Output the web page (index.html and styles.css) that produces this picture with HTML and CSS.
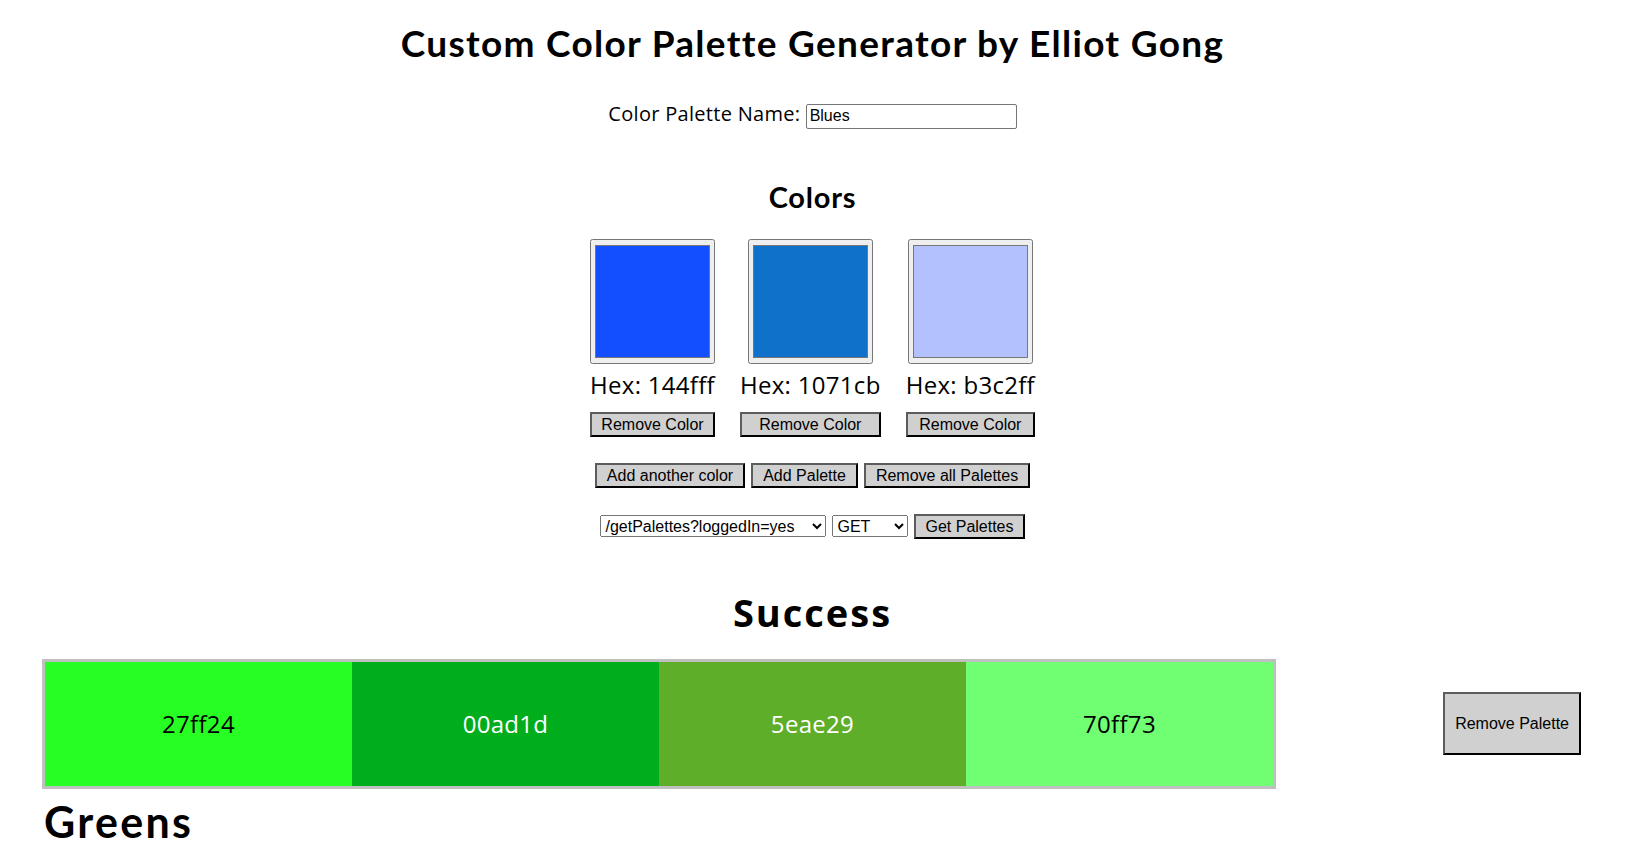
FILE: index.html
```html
<!DOCTYPE html>
<html lang="en">
<head>
<meta charset="utf-8">
<title>Custom Color Palette Generator</title>
<link rel="stylesheet" href="styles.css">
</head>
<body>
<h1 class="title">Custom Color Palette Generator by Elliot Gong</h1>
<div class="name-row"><label for="paletteName" class="name-label">Color Palette Name:</label> <input id="paletteName" class="name-input" type="text" value="Blues"></div>
<h2 class="section-title">Colors</h2>
<div class="colors">
  <div class="color-item">
    <input type="color" class="color-picker" value="#144fff">
    <p class="hex">Hex: 144fff</p>
    <button class="btn btn-block">Remove Color</button>
  </div>
  <div class="color-item">
    <input type="color" class="color-picker" value="#1071cb">
    <p class="hex">Hex: 1071cb</p>
    <button class="btn btn-block">Remove Color</button>
  </div>
  <div class="color-item">
    <input type="color" class="color-picker" value="#b3c2ff">
    <p class="hex">Hex: b3c2ff</p>
    <button class="btn btn-block">Remove Color</button>
  </div>
</div>
<div class="actions">
  <button class="btn">Add another color</button>
  <button class="btn">Add Palette</button>
  <button class="btn">Remove all Palettes</button>
</div>
<div class="request-row">
  <select class="select url-select">
    <option>/getPalettes?loggedIn=yes</option>
    <option>/getPalettes</option>
    <option>/notReal</option>
  </select>
  <select class="select method-select">
    <option>GET</option>
    <option>HEAD</option>
  </select>
  <button class="btn">Get Palettes</button>
</div>
<h2 class="status">Success</h2>
<div class="palettes">
  <div class="palette">
    <div class="palette-row">
      <div class="palette-bar">
        <div class="swatch" style="background-color:#27ff24">27ff24</div>
        <div class="swatch swatch-dark" style="background-color:#00ad1d">00ad1d</div>
        <div class="swatch swatch-dark" style="background-color:#5eae29">5eae29</div>
        <div class="swatch" style="background-color:#70ff73">70ff73</div>
      </div>
      <button class="btn btn-large">Remove Palette</button>
    </div>
    <h1 class="palette-name">Greens</h1>
  </div>
</div>
</body>
</html>
```
FILE: styles.css
```css
html, body {
  margin: 0;
  padding: 0;
  background: #ffffff;
  color: #000000;
}

body {
  font-family: "Open Sans", "Noto Sans", sans-serif;
}

.title {
  margin: 22px 0 0;
  font-family: "Lato", "Noto Sans", sans-serif;
  font-weight: 700;
  font-size: 37px;
  line-height: 42px;
  letter-spacing: 1.3px;
  text-align: center;
}

.name-row {
  margin-top: 37px;
  text-align: center;
  font-size: 20px;
  line-height: 25px;
}

.name-label {
  letter-spacing: 0.3px;
}

.name-input {
  box-sizing: border-box;
  width: 211px;
  height: 25px;
  margin: 0;
  padding: 1px 3px;
  font-family: "Liberation Sans", Arial, sans-serif;
  font-size: 16px;
  border: 1px solid #767676;
  border-radius: 2px;
  vertical-align: baseline;
}

.section-title {
  margin: 52px 0 0;
  font-family: "Lato", "Noto Sans", sans-serif;
  font-weight: 700;
  font-size: 29px;
  line-height: 32px;
  letter-spacing: 0.8px;
  text-align: center;
}

.colors {
  display: flex;
  justify-content: center;
  gap: 25px;
  margin-top: 26px;
}

.color-item {
  display: flex;
  flex-direction: column;
  align-items: center;
}

.color-picker {
  width: 125px;
  height: 125px;
  margin: 0;
}

.hex {
  margin: 6px 0 12px;
  font-size: 24px;
  line-height: 30px;
  letter-spacing: 0.3px;
  white-space: nowrap;
}

.btn {
  font-family: "Liberation Sans", Arial, sans-serif;
  font-size: 16px;
  line-height: 19px;
  color: #000;
  background: #d0d0d0;
  padding: 1px 9px;
  margin: 0;
  border: 2px solid;
  border-color: #5c5c5c #000 #000 #5c5c5c;
  border-radius: 0;
  white-space: nowrap;
}

.btn-block {
  align-self: stretch;
}

.actions {
  display: flex;
  justify-content: center;
  gap: 6px;
  margin-top: 26px;
}

.actions .btn {
  padding: 1px 10px;
}

.request-row {
  display: flex;
  justify-content: center;
  align-items: center;
  gap: 6px;
  margin-top: 26px;
}

.select {
  font-family: "Liberation Sans", Arial, sans-serif;
  font-size: 16px;
  height: 22px;
  margin: 0;
}

.url-select {
  width: 226px;
}

.method-select {
  width: 76px;
}

.status {
  margin: 50px 0 0;
  font-family: "Open Sans", sans-serif;
  font-weight: 700;
  font-size: 38px;
  line-height: 46px;
  letter-spacing: 2px;
  text-align: center;
}

.palettes {
  margin-top: 24px;
}

.palette-row {
  display: flex;
  align-items: center;
  justify-content: space-between;
  margin: 0 44px 0 42px;
}

.palette-bar {
  display: flex;
  flex: 0 0 1234px;
  box-sizing: border-box;
  height: 130px;
  border: 3px solid #c0c0c0;
}

.swatch {
  flex: 1 1 0;
  display: flex;
  align-items: center;
  justify-content: center;
  font-size: 24px;
  letter-spacing: 0.3px;
  color: #000;
}

.swatch-dark {
  color: #ffffff;
}

.btn-large {
  padding: 20px 10px;
}

.palette-name {
  margin: 7px 0 0 44px;
  font-family: "Lato", "Noto Sans", sans-serif;
  font-weight: 700;
  font-size: 43px;
  line-height: 52px;
  letter-spacing: 2.3px;
}
```
